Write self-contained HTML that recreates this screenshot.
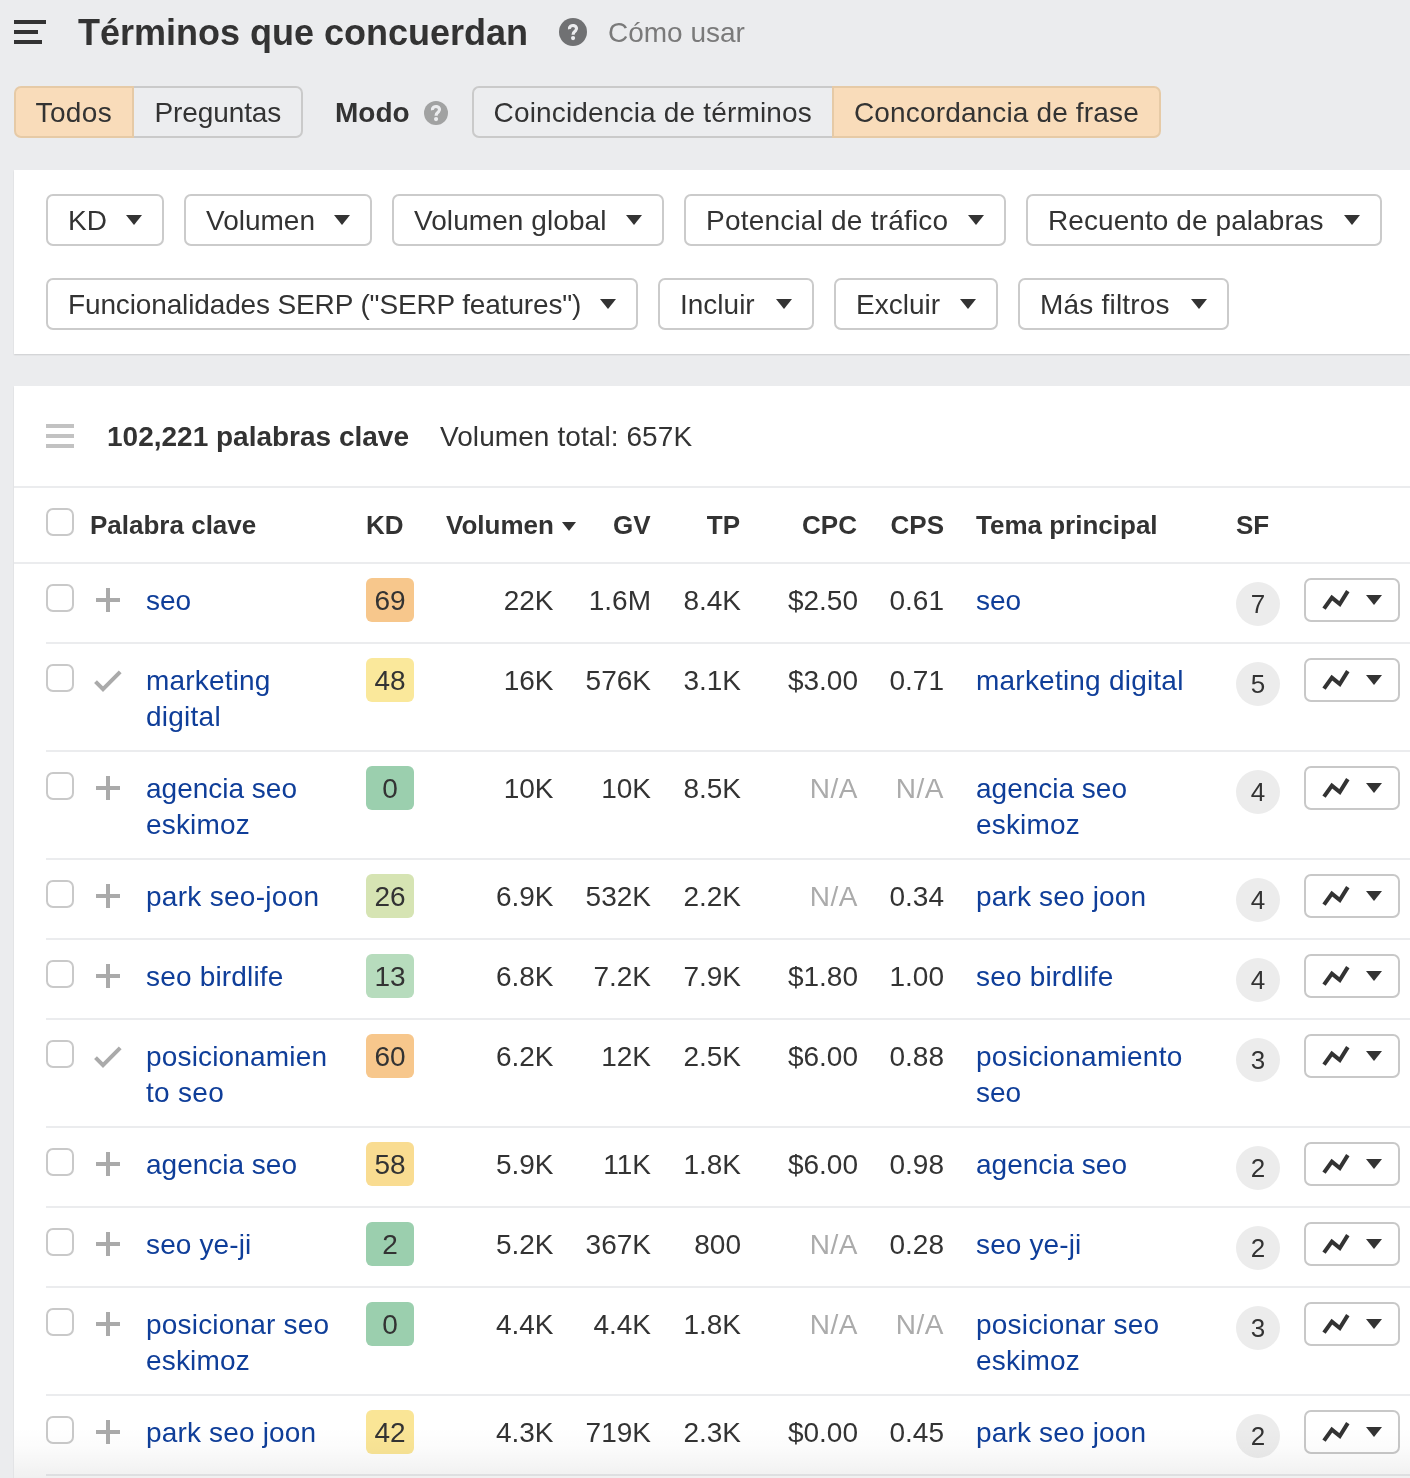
<!DOCTYPE html><html><head><meta charset="utf-8"><title>Términos que concuerdan</title><style>
*{box-sizing:border-box;margin:0;padding:0}
html,body{width:1410px;height:1478px;overflow:hidden;background:#ebecee}
body{font-family:"Liberation Sans",sans-serif;font-size:28px;color:#333;position:relative}
#root{position:absolute;left:0;top:0;width:1410px;height:1478px;overflow:hidden;will-change:transform}
.abs{position:absolute;white-space:nowrap}
.title{left:78px;top:12px;font-size:36px;font-weight:bold;line-height:42px;color:#333}
.como{left:608px;top:16px;line-height:34px;color:#7a7a7a}
.seg{position:absolute;top:86px;height:52px;line-height:50px;border:2px solid #cacaca;background:#ecedef;text-align:center;white-space:nowrap;color:#333}
.seg.on{background:#f9dcba;border-color:#e6caa6}
.modo{left:335px;top:96px;font-weight:bold;line-height:34px}
.panel{position:absolute;left:14px;right:0;background:#fff;box-shadow:0 1px 1.5px rgba(0,0,0,.13)}
.fbtn{position:absolute;height:52px;border:2px solid #cbcbcb;border-radius:7px;background:#fff;line-height:50px;padding-left:20px;white-space:nowrap;color:#333}
.fbtn i{position:absolute;right:20px;top:19px;width:0;height:0;border-left:8px solid transparent;border-right:8px solid transparent;border-top:10px solid #333}
.hl{position:absolute;left:14px;right:0;height:2px;background:#ebecee}
.rl{position:absolute;left:46px;right:0;height:2px;background:#ebecee}
.cb{position:absolute;left:46px;width:28px;height:28px;border:2px solid #c9c9c9;border-radius:7px;background:#fff}
.th{position:absolute;font-weight:bold;font-size:26px;line-height:32px;white-space:nowrap;color:#333}
.row{position:absolute;left:0;width:1410px}
.kw{position:absolute;left:146px;top:19px;line-height:36px;color:#0f3e99;white-space:nowrap}
.tm{position:absolute;left:976px;top:19px;line-height:36px;color:#0f3e99;white-space:nowrap}
.kd{position:absolute;left:366px;top:14px;width:48px;height:44px;border-radius:6px;text-align:center;line-height:46px;color:#333}
.n{position:absolute;top:19px;line-height:36px;text-align:right;white-space:nowrap;color:#333}
.na{color:#ababab;letter-spacing:0.5px}
.sf{position:absolute;left:1236px;top:18px;width:44px;height:44px;border-radius:22px;background:#ececec;text-align:center;line-height:44px;font-size:26px;color:#333}
.gb{position:absolute;left:1304px;top:14px;width:96px;height:44px;border:2px solid #c8c8c8;border-radius:7px;background:#fff}
.gb i{position:absolute;left:60px;top:15px;width:0;height:0;border-left:8px solid transparent;border-right:8px solid transparent;border-top:10px solid #333}
.gb svg{position:absolute;left:-2px;top:-2px}
.ic{position:absolute;left:86px;top:16px}
</style></head><body><div id="root">
<svg class="abs" style="left:14px;top:20px" width="34" height="26" viewBox="0 0 34 26"><rect x="0" y="0" width="32" height="4" fill="#333"/><rect x="0" y="10" width="24" height="4" fill="#333"/><rect x="0" y="20" width="28" height="4" fill="#333"/></svg>
<div class="abs title">Términos que concuerdan</div>
<svg class="abs" style="left:559px;top:18px" width="28" height="28" viewBox="-14 -14 28 28"><circle cx="0" cy="0" r="14" fill="#707173"/><path d="M-3.5 -2.9A3.55 3 0 1 1 2.72 -1.57Q0.05 0.5 0.05 2.8" stroke="#ebecee" stroke-width="3.2" fill="none"/><circle cx="0.05" cy="6.05" r="2.1" fill="#ebecee"/></svg>
<div class="abs como">Cómo usar</div>
<div class="seg on" style="left:14px;width:120px;border-radius:7px 0 0 7px;text-align:left;padding-left:19.5px;letter-spacing:0.4px">Todos</div>
<div class="seg" style="left:134px;width:169px;border-radius:0 7px 7px 0;border-left:none;text-align:left;padding-left:20.5px;letter-spacing:-0.1px">Preguntas</div>
<div class="abs modo">Modo</div>
<svg class="abs" style="left:424px;top:101px" width="24" height="24" viewBox="-12 -12 24 24"><circle cx="0" cy="0" r="12" fill="#a1a2a2"/><path d="M-3.5 -2.9A3.55 3 0 1 1 2.72 -1.57Q0.05 0.5 0.05 2.8" stroke="#ebecee" stroke-width="3.2" fill="none"/><circle cx="0.05" cy="6.05" r="2.1" fill="#ebecee"/></svg>
<div class="seg" style="left:472px;width:360px;border-radius:7px 0 0 7px;border-right:none;text-align:left;padding-left:19.5px;letter-spacing:0.17px">Coincidencia de términos</div>
<div class="seg on" style="left:832px;width:329px;border-radius:0 7px 7px 0;text-align:left;padding-left:20px;letter-spacing:0.15px">Concordancia de frase</div>
<div class="panel" style="top:170px;height:184px"></div>
<div class="fbtn" style="left:46px;top:194px;width:118px">KD<i></i></div>
<div class="fbtn" style="left:184px;top:194px;width:188px">Volumen<i></i></div>
<div class="fbtn" style="left:392px;top:194px;width:272px;letter-spacing:0.077px">Volumen global<i></i></div>
<div class="fbtn" style="left:684px;top:194px;width:322px;letter-spacing:0.211px">Potencial de tráfico<i></i></div>
<div class="fbtn" style="left:1026px;top:194px;width:356px;letter-spacing:0.079px">Recuento de palabras<i></i></div>
<div class="fbtn" style="left:46px;top:278px;width:592px;letter-spacing:-0.135px">Funcionalidades SERP ("SERP features")<i></i></div>
<div class="fbtn" style="left:658px;top:278px;width:156px">Incluir<i></i></div>
<div class="fbtn" style="left:834px;top:278px;width:164px">Excluir<i></i></div>
<div class="fbtn" style="left:1018px;top:278px;width:211px;letter-spacing:0.200px">Más filtros<i></i></div>
<div class="panel" style="top:386px;height:1100px"></div>
<svg class="abs" style="left:46px;top:424px" width="28" height="26" viewBox="0 0 28 26"><rect x="0" y="0" width="28" height="4" fill="#c2c2c2"/><rect x="0" y="10" width="28" height="4" fill="#c2c2c2"/><rect x="0" y="20" width="28" height="4" fill="#c2c2c2"/></svg>
<div class="abs" style="left:107px;top:420px;font-weight:bold;line-height:34px">102,221 palabras clave</div>
<div class="abs" style="left:440px;top:420px;line-height:34px;letter-spacing:0.08px">Volumen total: 657K</div>
<div class="hl" style="top:486px"></div>
<div class="cb" style="top:508px"></div>
<div class="th" style="left:90px;top:509px">Palabra clave</div>
<div class="th" style="left:366px;top:509px">KD</div>
<div class="th" style="left:446px;top:509px">Volumen</div>
<div class="th" style="left:450.5px;width:200px;text-align:right;top:509px">GV</div>
<div class="th" style="left:540px;width:200px;text-align:right;top:509px">TP</div>
<div class="th" style="left:657px;width:200px;text-align:right;top:509px">CPC</div>
<div class="th" style="left:744px;width:200px;text-align:right;top:509px">CPS</div>
<div class="th" style="left:976px;top:509px">Tema principal</div>
<div class="th" style="left:1236px;top:509px">SF</div>
<div class="abs" style="left:561.5px;top:522px;width:0;height:0;border-left:7.5px solid transparent;border-right:7.5px solid transparent;border-top:9px solid #333"></div>
<div class="hl" style="top:562px"></div>
<div class="row" style="top:564px;height:78px">
<div class="cb" style="top:20px"></div>
<svg class="ic" width="44" height="44" viewBox="0 0 44 44"><path d="M22 8v24M10 20h24" stroke="#aaa" stroke-width="4" fill="none"/></svg>
<div class="kw">seo</div>
<div class="kd" style="background:#f7c78c">69</div>
<div class="n" style="left:353.5px;width:200px">22K</div>
<div class="n" style="left:451px;width:200px">1.6M</div>
<div class="n" style="left:541px;width:200px">8.4K</div>
<div class="n" style="left:658px;width:200px">$2.50</div>
<div class="n" style="left:744px;width:200px">0.61</div>
<div class="tm">seo</div>
<div class="sf">7</div>
<div class="gb"><svg width="96" height="44" viewBox="0 0 96 44"><path d="M20 30.7L27.9 19.6L35.8 26.1L43.8 13.1" stroke="#333" stroke-width="4" fill="none" stroke-linejoin="miter"/></svg><i></i></div>
</div>
<div class="rl" style="top:642px"></div>
<div class="row" style="top:644px;height:106px">
<div class="cb" style="top:20px"></div>
<svg class="ic" width="44" height="44" viewBox="0 0 44 44"><path d="M9.5 21.7L17 29.2L34.2 11.9" stroke="#aaa" stroke-width="4" fill="none"/></svg>
<div class="kw"><span style="letter-spacing:0.188px">marketing</span><br><span style="letter-spacing:0.250px">digital</span></div>
<div class="kd" style="background:#fae89b">48</div>
<div class="n" style="left:353.5px;width:200px">16K</div>
<div class="n" style="left:451px;width:200px">576K</div>
<div class="n" style="left:541px;width:200px">3.1K</div>
<div class="n" style="left:658px;width:200px">$3.00</div>
<div class="n" style="left:744px;width:200px">0.71</div>
<div class="tm"><span style="letter-spacing:0.219px">marketing digital</span></div>
<div class="sf">5</div>
<div class="gb"><svg width="96" height="44" viewBox="0 0 96 44"><path d="M20 30.7L27.9 19.6L35.8 26.1L43.8 13.1" stroke="#333" stroke-width="4" fill="none" stroke-linejoin="miter"/></svg><i></i></div>
</div>
<div class="rl" style="top:750px"></div>
<div class="row" style="top:752px;height:106px">
<div class="cb" style="top:20px"></div>
<svg class="ic" width="44" height="44" viewBox="0 0 44 44"><path d="M22 8v24M10 20h24" stroke="#aaa" stroke-width="4" fill="none"/></svg>
<div class="kw">agencia seo<br><span style="letter-spacing:0.167px">eskimoz</span></div>
<div class="kd" style="background:#9bcfae">0</div>
<div class="n" style="left:353.5px;width:200px">10K</div>
<div class="n" style="left:451px;width:200px">10K</div>
<div class="n" style="left:541px;width:200px">8.5K</div>
<div class="n na" style="left:658px;width:200px">N/A</div>
<div class="n na" style="left:744px;width:200px">N/A</div>
<div class="tm">agencia seo<br><span style="letter-spacing:0.167px">eskimoz</span></div>
<div class="sf">4</div>
<div class="gb"><svg width="96" height="44" viewBox="0 0 96 44"><path d="M20 30.7L27.9 19.6L35.8 26.1L43.8 13.1" stroke="#333" stroke-width="4" fill="none" stroke-linejoin="miter"/></svg><i></i></div>
</div>
<div class="rl" style="top:858px"></div>
<div class="row" style="top:860px;height:78px">
<div class="cb" style="top:20px"></div>
<svg class="ic" width="44" height="44" viewBox="0 0 44 44"><path d="M22 8v24M10 20h24" stroke="#aaa" stroke-width="4" fill="none"/></svg>
<div class="kw"><span style="letter-spacing:0.292px">park seo-joon</span></div>
<div class="kd" style="background:#d6e4b3">26</div>
<div class="n" style="left:353.5px;width:200px">6.9K</div>
<div class="n" style="left:451px;width:200px">532K</div>
<div class="n" style="left:541px;width:200px">2.2K</div>
<div class="n na" style="left:658px;width:200px">N/A</div>
<div class="n" style="left:744px;width:200px">0.34</div>
<div class="tm"><span style="letter-spacing:0.167px">park seo joon</span></div>
<div class="sf">4</div>
<div class="gb"><svg width="96" height="44" viewBox="0 0 96 44"><path d="M20 30.7L27.9 19.6L35.8 26.1L43.8 13.1" stroke="#333" stroke-width="4" fill="none" stroke-linejoin="miter"/></svg><i></i></div>
</div>
<div class="rl" style="top:938px"></div>
<div class="row" style="top:940px;height:78px">
<div class="cb" style="top:20px"></div>
<svg class="ic" width="44" height="44" viewBox="0 0 44 44"><path d="M22 8v24M10 20h24" stroke="#aaa" stroke-width="4" fill="none"/></svg>
<div class="kw"><span style="letter-spacing:0.182px">seo birdlife</span></div>
<div class="kd" style="background:#b7dcbd">13</div>
<div class="n" style="left:353.5px;width:200px">6.8K</div>
<div class="n" style="left:451px;width:200px">7.2K</div>
<div class="n" style="left:541px;width:200px">7.9K</div>
<div class="n" style="left:658px;width:200px">$1.80</div>
<div class="n" style="left:744px;width:200px">1.00</div>
<div class="tm"><span style="letter-spacing:0.182px">seo birdlife</span></div>
<div class="sf">4</div>
<div class="gb"><svg width="96" height="44" viewBox="0 0 96 44"><path d="M20 30.7L27.9 19.6L35.8 26.1L43.8 13.1" stroke="#333" stroke-width="4" fill="none" stroke-linejoin="miter"/></svg><i></i></div>
</div>
<div class="rl" style="top:1018px"></div>
<div class="row" style="top:1020px;height:106px">
<div class="cb" style="top:20px"></div>
<svg class="ic" width="44" height="44" viewBox="0 0 44 44"><path d="M9.5 21.7L17 29.2L34.2 11.9" stroke="#aaa" stroke-width="4" fill="none"/></svg>
<div class="kw"><span style="letter-spacing:0.167px">posicionamien</span><br><span style="letter-spacing:0.300px">to seo</span></div>
<div class="kd" style="background:#f7c78c">60</div>
<div class="n" style="left:353.5px;width:200px">6.2K</div>
<div class="n" style="left:451px;width:200px">12K</div>
<div class="n" style="left:541px;width:200px">2.5K</div>
<div class="n" style="left:658px;width:200px">$6.00</div>
<div class="n" style="left:744px;width:200px">0.88</div>
<div class="tm"><span style="letter-spacing:0.286px">posicionamiento</span><br>seo</div>
<div class="sf">3</div>
<div class="gb"><svg width="96" height="44" viewBox="0 0 96 44"><path d="M20 30.7L27.9 19.6L35.8 26.1L43.8 13.1" stroke="#333" stroke-width="4" fill="none" stroke-linejoin="miter"/></svg><i></i></div>
</div>
<div class="rl" style="top:1126px"></div>
<div class="row" style="top:1128px;height:78px">
<div class="cb" style="top:20px"></div>
<svg class="ic" width="44" height="44" viewBox="0 0 44 44"><path d="M22 8v24M10 20h24" stroke="#aaa" stroke-width="4" fill="none"/></svg>
<div class="kw">agencia seo</div>
<div class="kd" style="background:#f9dc91">58</div>
<div class="n" style="left:353.5px;width:200px">5.9K</div>
<div class="n" style="left:451px;width:200px">11K</div>
<div class="n" style="left:541px;width:200px">1.8K</div>
<div class="n" style="left:658px;width:200px">$6.00</div>
<div class="n" style="left:744px;width:200px">0.98</div>
<div class="tm">agencia seo</div>
<div class="sf">2</div>
<div class="gb"><svg width="96" height="44" viewBox="0 0 96 44"><path d="M20 30.7L27.9 19.6L35.8 26.1L43.8 13.1" stroke="#333" stroke-width="4" fill="none" stroke-linejoin="miter"/></svg><i></i></div>
</div>
<div class="rl" style="top:1206px"></div>
<div class="row" style="top:1208px;height:78px">
<div class="cb" style="top:20px"></div>
<svg class="ic" width="44" height="44" viewBox="0 0 44 44"><path d="M22 8v24M10 20h24" stroke="#aaa" stroke-width="4" fill="none"/></svg>
<div class="kw"><span style="letter-spacing:0.125px">seo ye-ji</span></div>
<div class="kd" style="background:#9bcfae">2</div>
<div class="n" style="left:353.5px;width:200px">5.2K</div>
<div class="n" style="left:451px;width:200px">367K</div>
<div class="n" style="left:541px;width:200px">800</div>
<div class="n na" style="left:658px;width:200px">N/A</div>
<div class="n" style="left:744px;width:200px">0.28</div>
<div class="tm"><span style="letter-spacing:0.125px">seo ye-ji</span></div>
<div class="sf">2</div>
<div class="gb"><svg width="96" height="44" viewBox="0 0 96 44"><path d="M20 30.7L27.9 19.6L35.8 26.1L43.8 13.1" stroke="#333" stroke-width="4" fill="none" stroke-linejoin="miter"/></svg><i></i></div>
</div>
<div class="rl" style="top:1286px"></div>
<div class="row" style="top:1288px;height:106px">
<div class="cb" style="top:20px"></div>
<svg class="ic" width="44" height="44" viewBox="0 0 44 44"><path d="M22 8v24M10 20h24" stroke="#aaa" stroke-width="4" fill="none"/></svg>
<div class="kw"><span style="letter-spacing:0.192px">posicionar seo</span><br><span style="letter-spacing:0.167px">eskimoz</span></div>
<div class="kd" style="background:#9bcfae">0</div>
<div class="n" style="left:353.5px;width:200px">4.4K</div>
<div class="n" style="left:451px;width:200px">4.4K</div>
<div class="n" style="left:541px;width:200px">1.8K</div>
<div class="n na" style="left:658px;width:200px">N/A</div>
<div class="n na" style="left:744px;width:200px">N/A</div>
<div class="tm"><span style="letter-spacing:0.192px">posicionar seo</span><br><span style="letter-spacing:0.167px">eskimoz</span></div>
<div class="sf">3</div>
<div class="gb"><svg width="96" height="44" viewBox="0 0 96 44"><path d="M20 30.7L27.9 19.6L35.8 26.1L43.8 13.1" stroke="#333" stroke-width="4" fill="none" stroke-linejoin="miter"/></svg><i></i></div>
</div>
<div class="rl" style="top:1394px"></div>
<div class="row" style="top:1396px;height:78px">
<div class="cb" style="top:20px"></div>
<svg class="ic" width="44" height="44" viewBox="0 0 44 44"><path d="M22 8v24M10 20h24" stroke="#aaa" stroke-width="4" fill="none"/></svg>
<div class="kw"><span style="letter-spacing:0.167px">park seo joon</span></div>
<div class="kd" style="background:#fae596">42</div>
<div class="n" style="left:353.5px;width:200px">4.3K</div>
<div class="n" style="left:451px;width:200px">719K</div>
<div class="n" style="left:541px;width:200px">2.3K</div>
<div class="n" style="left:658px;width:200px">$0.00</div>
<div class="n" style="left:744px;width:200px">0.45</div>
<div class="tm"><span style="letter-spacing:0.167px">park seo joon</span></div>
<div class="sf">2</div>
<div class="gb"><svg width="96" height="44" viewBox="0 0 96 44"><path d="M20 30.7L27.9 19.6L35.8 26.1L43.8 13.1" stroke="#333" stroke-width="4" fill="none" stroke-linejoin="miter"/></svg><i></i></div>
</div>
<div class="rl" style="top:1474px"></div>
<div class="abs" style="left:14px;right:0;top:1428px;height:50px;background:linear-gradient(to bottom,rgba(0,0,0,0),rgba(0,0,0,0.015) 40%,rgba(0,0,0,0.06))"></div>
</div></body></html>
